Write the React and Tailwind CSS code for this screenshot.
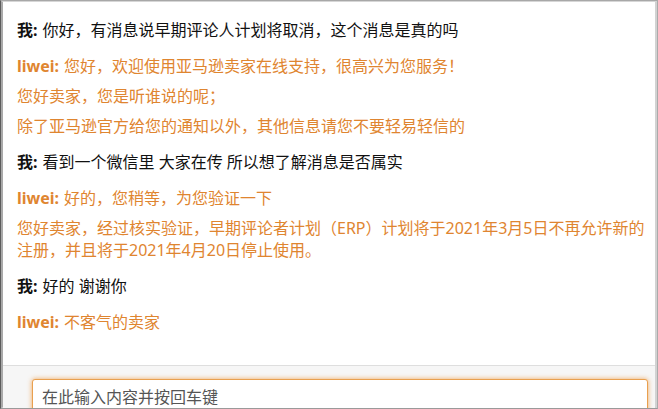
const messages = [
  { from: 'me', lines: ['你好，有消息说早期评论人计划将取消，这个消息是真的吗'] },
  {
    from: 'liwei',
    lines: [
      '您好，欢迎使用亚马逊卖家在线支持，很高兴为您服务！',
      '您好卖家，您是听谁说的呢；',
      '除了亚马逊官方给您的通知以外，其他信息请您不要轻易轻信的',
    ],
  },
  { from: 'me', lines: ['看到一个微信里 大家在传 所以想了解消息是否属实'] },
  {
    from: 'liwei',
    lines: [
      '好的，您稍等，为您验证一下',
      '您好卖家，经过核实验证，早期评论者计划（ERP）计划将于2021年3月5日不再允许新的注册，并且将于2021年4月20日停止使用。',
    ],
  },
  { from: 'me', lines: ['好的 谢谢你'] },
  { from: 'liwei', lines: ['不客气的卖家'] },
];

function Message({ from, lines }) {
  const isMe = from === 'me';

  return (
    <div className={isMe ? 'text-[#111]' : 'text-[#df8530]'}>
      {lines.map((line, index) => (
        <p key={index} className={index > 0 ? 'mt-[8px]' : ''}>
          {index === 0 && (
            <span className="mr-[5px] font-bold">{isMe ? '我:' : 'liwei:'}</span>
          )}
          {line}
        </p>
      ))}
    </div>
  );
}

export default function App() {
  return (
    <div
      className="h-[409px] w-[658px] overflow-hidden border border-t-[#a8a8a8] border-r-[#ababab] border-b-[#9a9a9a] border-l-[#5c5c5c] bg-white text-[16px] leading-[22px]"
      style={{ fontFamily: '"Noto Sans", "Noto Sans CJK SC", sans-serif' }}
    >
      <div className="flex h-full flex-col border-t border-r-2 border-b border-l-2 border-t-[#d6d6d6] border-r-[#d2d2d2] border-b-[#cfcfcf] border-l-[#a9a9a9]">
        <div className="flex h-[363px] shrink-0 flex-col gap-[14px] pl-[14px] pr-[9px] pt-[17px]">
          {messages.map((message, index) => (
            <Message key={index} from={message.from} lines={message.lines} />
          ))}
        </div>

        <div className="flex-1 border-t border-[#dedede] bg-[#f6f6f6] pl-[29px] pr-[7px] pt-[13px]">
          <input
            type="text"
            placeholder="在此输入内容并按回车键"
            className="h-[36px] w-[616px] rounded-[3px] border border-[#e9a04f] bg-white px-[9px] text-[16px] text-[#333] shadow-[0_0_5px_rgba(236,140,40,0.75)] outline-none placeholder:text-[#555]"
          />
        </div>
      </div>
    </div>
  );
}
